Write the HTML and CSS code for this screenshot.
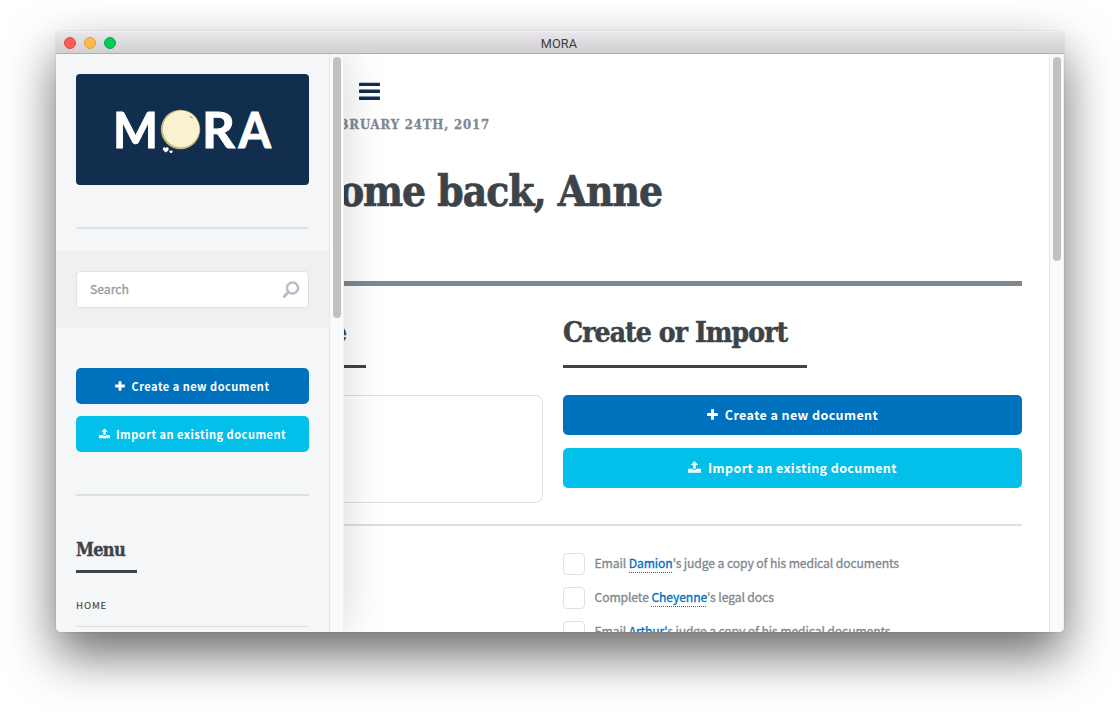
FILE: index.html
```html
<!DOCTYPE html>
<html lang="en">
<head>
<meta charset="utf-8">
<title>MORA</title>
<link rel="stylesheet" href="styles.css">
</head>
<body>
<svg class="sprite" aria-hidden="true">
  <symbol id="plus" viewBox="0 0 10 10"><path d="M3.6 0.2h2.8v3.4h3.4v2.8h-3.4v3.4h-2.8v-3.4h-3.4v-2.8h3.4z" fill="currentColor"/></symbol>
  <symbol id="upload" viewBox="0 0 13 12"><path d="M6.5 0 2.8 4h2.4v3.8h2.6v-3.8h2.4z" fill="currentColor"/><path fill-rule="evenodd" d="M.6 7.8h3.7c.2.8 1 1.1 2.2 1.1s2-.3 2.2-1.1h3.7q.6 0 .6.6v2.7q0 .6-.6.6h-11.8q-.6 0-.6-.6v-2.7q0-.6.6-.6zM8.7 9.9v.7h.7v-.7zM10.7 9.9v.7h.7v-.7z" fill="currentColor"/></symbol>
</svg>
<div class="window">
  <header class="titlebar">
    <div class="lights"><i class="light close"></i><i class="light minimise"></i><i class="light zoom"></i></div>
    <span class="title">MORA</span>
  </header>
  <div class="body">
    <main class="main">
      <div class="content">
        <svg class="burger" viewBox="0 0 21 18"><g fill="#112e4e"><rect width="21" height="3.4" y=".7" rx=".7"/><rect width="21" height="3.4" y="7.600" rx=".7"/><rect width="21" height="3.4" y="14.500" rx=".7"/></g></svg>
        <p class="date">February 24th, 2017</p>
        <h1 class="welcome">Welcome back, Anne</h1>
        <div class="columns">
          <section class="column">
            <h2 class="heading heading-left">e</h2>
            <div class="panel"></div>
          </section>
          <section class="column">
            <h2 class="heading heading-right">Create or Import</h2>
            <a class="button blue"><svg class="plus"><use href="#plus"/></svg><span>Create a new document</span></a>
            <a class="button cyan"><svg class="upload"><use href="#upload"/></svg><span>Import an existing document</span></a>
          </section>
        </div>
        <ul class="tasks">
          <li class="task"><i class="box"></i><span>Email <a class="link">Damion</a>'s judge a copy of his medical documents</span></li>
          <li class="task"><i class="box"></i><span>Complete <a class="link">Cheyenne</a>'s legal docs</span></li>
          <li class="task"><i class="box"></i><span>Email <a class="link">Arthur'</a>s judge a copy of his medical documents</span></li>
        </ul>
      </div>
      <div class="track"><div class="thumb main-thumb"></div></div>
    </main>
    <aside class="sidebar">
      <div class="side">
        <div class="brand">
          <svg class="logo" viewBox="0 0 233 111">
            <g class="logo-text"><text x="37" y="73.700" textLength="45" lengthAdjust="spacingAndGlyphs">M</text><text x="126" y="73.700" textLength="33" lengthAdjust="spacingAndGlyphs">R</text><text x="162.500" y="73.700" textLength="32.500" lengthAdjust="spacingAndGlyphs">A</text></g>
            <circle cx="104.500" cy="55.500" r="19.700" fill="#c9b47c"/><circle cx="105" cy="55" r="18.300" fill="#f8f2d0"/>
            <path d="M113.800 42.800l1.600.2 1.200 1.400" fill="none" stroke="#8e8970"/>
            <path d="M89.700 78.500c-1.500-1.300-2.800-2.200-2.800-3.700 0-1.900 2.100-2.200 2.800-.8.900-1.400 3.100-1 3 .9 0 1.500-1.500 2.500-3 3.600zM95 79.300c-1-.6-1.700-1.100-1.700-2s1.200-1.100 1.700-.4c.6-.7 1.700-.4 1.700.5s-.8 1.400-1.700 1.900z" fill="#fff"/>
          </svg>
        </div>
        <div class="search">
          <div class="field"><span class="placeholder">Search</span><svg class="glass" viewBox="0 0 18 18"><circle cx="10.500" cy="7" r="5.600" fill="none" stroke="#b4bfca" stroke-width="2.500"/><path d="M6.500 11 2.200 15.400" stroke="#b4bfca" stroke-width="2.800" stroke-linecap="round"/></svg></div>
        </div>
        <div class="actions">
          <a class="button small blue"><svg class="plus"><use href="#plus"/></svg><span>Create a new document</span></a>
          <a class="button small cyan"><svg class="upload"><use href="#upload"/></svg><span>Import an existing document</span></a>
        </div>
        <nav class="menu">
          <h2 class="menu-title">Menu</h2>
          <a class="menu-item">HOME</a>
        </nav>
      </div>
      <div class="track"><div class="thumb side-thumb"></div></div>
    </aside>
  </div>
</div>
</body>
</html>
```
FILE: styles.css
```css
* { box-sizing: border-box; }
body { margin: 0; width: 1120px; height: 712px; overflow: hidden; background: #fff; font-family: "Noto Sans CJK SC", "Noto Sans", sans-serif; color: #7f888f; }
h1, h2, p, ul { margin: 0; padding: 0; }
svg { display: block; flex: none; }
.sprite { position: absolute; width: 0; height: 0; }

.window { width: 1008px; height: 601px; margin: 31px 56px; border-radius: 5px; box-shadow: 0 0 1px rgba(0,0,0,.45), 0 23px 50px rgba(0,0,0,.58); }
.titlebar { display: flex; align-items: center; justify-content: center; position: relative; height: 23px; background: linear-gradient(#f4f3f4 0, #e7e5e7 2px, #d2cfd2); border-bottom: 1px solid #b1adb1; border-radius: 5px 5px 0 0; }
.lights { position: absolute; left: 8px; top: 6px; display: flex; gap: 8px; }
.light { width: 12px; height: 12px; border-radius: 50%; border: 1px solid; }
.close { background: #fc5b57; border-color: #df4744; }
.minimise { background: #fdbc4c; border-color: #de9f34; }
.zoom { background: #03c956; border-color: #08ac4a; }
.title { font: 12.7px/20px Roboto, sans-serif; color: #3f3c3f; padding-top: 3px; letter-spacing: .2px; margin-right: 2px; }

.body { position: relative; height: 578px; overflow: hidden; border-radius: 0 0 5px 5px; }
.main { display: flex; height: 578px; background: #fff; }
.content { flex: 1; padding: 0 27px 0 28px; overflow: hidden; }
.track { width: 15px; flex: none; background: #fafafa; border-left: 1px solid #e6e6e6; border-right: 1px solid #efefef; padding: 3px 2px 0 3px; }
.thumb { width: 8px; border-radius: 4px; background: #c1c1c1; }
.main-thumb { height: 204px; }
.side-thumb { height: 261px; }

.burger { width: 21px; height: 18px; margin: 28px 0 0 275px; }
.date { width: 406px; margin-top: 14px; height: 22px; font: bold 13px/22px "DejaVu Serif Condensed", "DejaVu Serif", serif; font-stretch: condensed; letter-spacing: .85px; text-transform: uppercase; text-align: right; white-space: nowrap; -webkit-text-stroke: .3px currentColor; }
.welcome { width: 578px; margin-top: 26px; height: 60px; font: bold 42px/60px "DejaVu Serif Condensed", "DejaVu Serif", serif; font-stretch: condensed; letter-spacing: -1px; color: #3d4449; text-align: right; white-space: nowrap; -webkit-text-stroke: .7px currentColor; }
.columns { display: grid; grid-template-columns: 459px 459px; gap: 20px; margin-top: 59px; border-top: 5px solid #7f888f; border-bottom: 2px solid #dce0e0; height: 245px; padding-top: 25px; }
.heading { height: 57px; margin-bottom: 27px; border-bottom: 3px solid #3d4449; font: bold 28px/43px "DejaVu Serif Condensed", "DejaVu Serif", serif; font-stretch: condensed; letter-spacing: -.9px; color: #3d4449; white-space: nowrap; -webkit-text-stroke: .5px currentColor; }
.heading-left { width: 282px; padding-right: 20px; text-align: right; }
.heading-right { width: 244px; }
.panel { height: 108px; border: 1px solid #dfe0e0; border-radius: 8px; }
.button { display: flex; align-items: center; justify-content: center; gap: 7px; height: 40px; margin-bottom: 13px; padding-bottom: 2px; border-radius: 5px; color: #fff; font-size: 12.5px; font-weight: bold; letter-spacing: .4px; white-space: nowrap; }
.blue { background: #0071bd; }
.cyan { background: #02c0ea; }
.plus { width: 11px; height: 11px; }
.upload { width: 13px; height: 12px; }
.tasks { list-style: none; margin: 27px 0 0 479px; display: flex; flex-direction: column; gap: 12px; }
.task { display: flex; gap: 9.5px; height: 22px; font-size: 12.2px; line-height: 20px; white-space: nowrap; -webkit-text-stroke: .3px currentColor; letter-spacing: -.12px; }
.box { width: 22px; height: 22px; flex: none; border: 1px solid #dfe0e0; border-radius: 4px; }
.link { color: #0071bd; padding-bottom: 1px; background: repeating-linear-gradient(90deg, #0071bd 0 1px, transparent 1px 2px) 0 100% / 100% 1px no-repeat; }

.sidebar { position: absolute; left: 0; top: 0; width: 288px; height: 578px; display: flex; background: #f5f6f8; box-shadow: 0 0 40px rgba(0,0,0,.17); }
.side { flex: 1; overflow: hidden; }
.brand { margin: 20px 20px 0; height: 155px; border-bottom: 2px solid #dce0e2; border-radius: 4px; }
.logo { width: 233px; height: 111px; background: #112e4e; border-radius: 4px; }
.logo-text { font: bold 49px Lato, sans-serif; fill: #fff; stroke: #fff; stroke-width: 1px; }
.search { margin-top: 22px; height: 77px; padding: 20px; background: #eff0f2; }
.field { display: flex; align-items: center; justify-content: space-between; height: 37px; padding: 0 8px 0 13px; background: #fff; border: 1px solid #dfe1e4; border-radius: 4px; font-size: 12.2px; color: #999c9f; -webkit-text-stroke: .3px currentColor; }
.placeholder { padding-bottom: 2px; }
.glass { width: 18px; height: 18px; }
.actions { margin: 0 20px; padding-top: 40px; height: 168px; border-bottom: 2px solid #dae0e0; }
.small { height: 36px; margin-bottom: 12px; padding-bottom: 1px; font-size: 11px; gap: 6px; letter-spacing: .5px; }
.small .plus { width: 10px; height: 10px; }
.small .upload { width: 11px; height: 11px; }
.menu { margin: 40px 20px 0; }
.menu-title { width: 61px; height: 37px; border-bottom: 3px solid #3d4449; font: bold 18px/27px "DejaVu Serif Condensed", "DejaVu Serif", serif; font-stretch: condensed; letter-spacing: -.7px; color: #3d4449; -webkit-text-stroke: .4px currentColor; }
.menu-item { display: block; height: 54px; padding-top: 11px; border-bottom: 1px solid #dadde1; color: #3d4449; font-size: 9.6px; line-height: 43px; letter-spacing: .9px; -webkit-text-stroke: .15px currentColor; }
```
